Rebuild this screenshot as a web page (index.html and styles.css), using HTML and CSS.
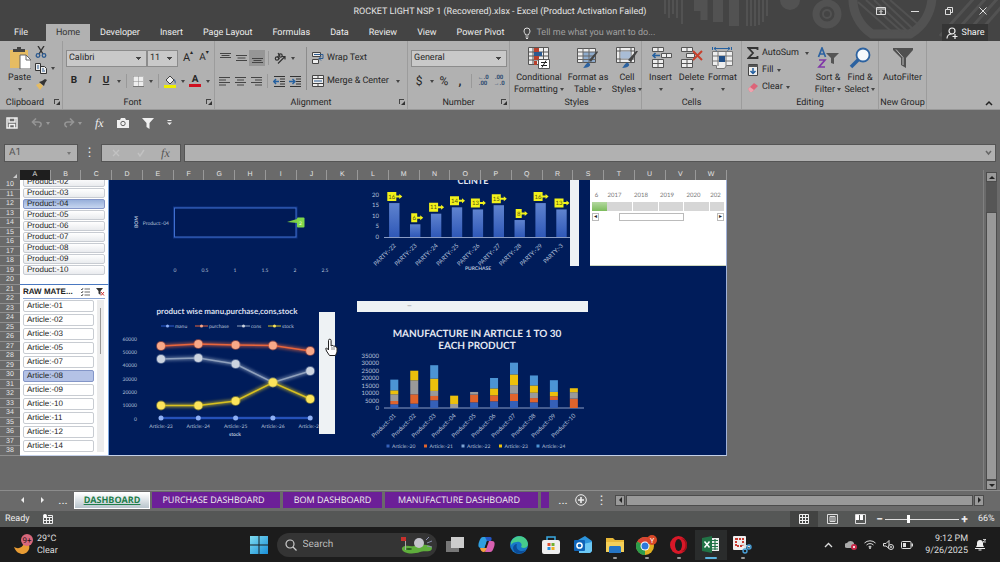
FILE: index.html
```html
<!DOCTYPE html>
<html lang="en">
<head>
<meta charset="utf-8">
<meta name="viewport" content="width=device-width, initial-scale=1">
<title>ROCKET LIGHT NSP 1 (Recovered).xlsx - Excel</title>
<link rel="stylesheet" href="styles.css">
</head>
<body>
<header class="top">
  <svg class="top-art" width="340" height="41" viewBox="660 0 340 41" aria-hidden="true">
    <g stroke="#525252" fill="none">
      <path stroke-width="2" d="M665 0v14M669 0v18M673 0v14M677 0v18M682 0v24M747 0v26M751 0v26M755 0v26M759 0v25M763 0v22M767 0v16"/>
      <path stroke-width="8" d="M698 0v11"/><path stroke-width="10" d="M718 0v22M734 0v26"/><path stroke-width="7" d="M704 0v20"/>
      <circle cx="827" cy="14" r="11" stroke-width="7"/><circle cx="827" cy="14" r="4" stroke-width="2"/>
      <path stroke-width="9" d="M853 -4a42 42 0 0 0 19 38h38a44 44 0 0 0 22-38"/>
      <path stroke-width="2" d="M866 0l36 32M874 0l34 32M882 0l32 30M858 2l34 30M890 0l30 26"/>
      <path stroke-width="3" d="M940 36l36-40M950 38l38-42M962 38l36-40M974 38l30-34"/>
    </g>
    <circle cx="790" cy="0" r="10" fill="#525252"/>
  </svg>
  <div class="titlebar">
    <span class="doc-title">ROCKET LIGHT NSP 1 (Recovered).xlsx - Excel (Product Activation Failed)</span>
    <div class="window-buttons">
      <button aria-label="Ribbon display options"><svg width="12" height="10" viewBox="0 0 12 10"><path d="M1.500 1.500h9v7h-9zM1.500 3h9M6 8V4.500M4.500 6L6 4.500 7.500 6" fill="none" stroke="#ddd"/></svg></button>
      <button aria-label="Minimize"><svg width="10" height="10" viewBox="0 0 10 10"><path d="M1 5.500h8" stroke="#ddd"/></svg></button>
      <button aria-label="Restore"><svg width="10" height="10" viewBox="0 0 10 10"><path d="M1.500 3.500h5v5h-5zM3.500 3.500v-2h5v5h-2" fill="none" stroke="#ddd"/></svg></button>
      <button aria-label="Close"><svg width="10" height="10" viewBox="0 0 10 10"><path d="M1.500 1.500l7 7M8.500 1.500l-7 7" stroke="#ddd"/></svg></button>
    </div>
  </div>
  <nav class="tabs" aria-label="Ribbon tabs">
    <button class="tab tab-file">File</button>
    <button class="tab tab-on">Home</button>
    <button class="tab">Developer</button>
    <button class="tab">Insert</button>
    <button class="tab">Page Layout</button>
    <button class="tab">Formulas</button>
    <button class="tab">Data</button>
    <button class="tab">Review</button>
    <button class="tab">View</button>
    <button class="tab">Power Pivot</button>
    <label class="tell"><svg width="8" height="12" viewBox="0 0 8 12"><path d="M2.500 8C2.500 6.500 1 6 1 4a3 3 0 0 1 6 0c0 2-1.500 2.500-1.500 4zM2.500 10h3M3 11.500h2" fill="none" stroke="#ddd"/></svg><input type="text" placeholder="Tell me what you want to do..." aria-label="Tell me what you want to do"></label>
    <button class="share"><svg width="12" height="12" viewBox="0 0 12 12"><g fill="none" stroke="#eee" stroke-width="1.200"><circle cx="6" cy="4" r="3"/><path d="M1 11.500c0-3 2-4.500 4.500-4.500M6.500 9.500h5M9 7v5"/></g></svg>Share</button>
  </nav>
</header>

<section class="ribbon" aria-label="Home ribbon">
  <div class="group g-clip">
    <div class="body">
      <button class="big paste"><svg width="22" height="22" viewBox="0 0 22 22"><path d="M1 3h18v18H1z" fill="#e6bc62"/><path d="M4 5V2h4V0h4v2h4v3z" fill="#444"/><path d="M11 8h6l5 5v9H11z" fill="#fff" stroke="#666"/><path d="M17 8v5h5" fill="none" stroke="#666"/></svg><span>Paste</span><i class="caret"></i></button>
      <div class="stack">
        <button aria-label="Cut"><svg width="12" height="12" viewBox="0 0 12 12"><path d="M3 0l5 8M9 0L4 8" stroke="#333" stroke-width="1.400"/><g fill="none" stroke="#2c5a90" stroke-width="1.300"><circle cx="3" cy="9.500" r="1.800"/><circle cx="9" cy="9.500" r="1.800"/></g></svg></button>
        <button aria-label="Copy"><svg width="12" height="12" viewBox="0 0 12 12"><path d="M.5 1.500h5v7h-5zM5.500 4.500h4l2 2v5h-6z" fill="#eee" stroke="#333"/><path d="M2 4h2M2 6h2M7 7h2M7 9h3" stroke="#2c5a90"/></svg><i class="caret"></i></button>
        <button aria-label="Format painter"><svg width="12" height="12" viewBox="0 0 12 12"><path d="M1 7l4-2 3 3-3 4z" fill="#e6bc62"/><path d="M4 4l5 4 1-3 2-3-2-1-3 2z" fill="#333"/></svg></button>
      </div>
    </div>
    <div class="cap">Clipboard<i class="launch"></i></div>
  </div>

  <div class="group g-font">
    <div class="body rows">
      <div class="row">
        <select class="combo c-font" aria-label="Font"><option>Calibri</option></select><select class="combo c-size" aria-label="Font size"><option>11</option></select>
        <button class="ib grow" aria-label="Increase font size">A<sup>▴</sup></button><button class="ib shrink" aria-label="Decrease font size">A<sup>▾</sup></button>
      </div>
      <div class="row">
        <button class="ib"><b>B</b></button><button class="ib"><b><em>I</em></b></button><button class="ib"><b><u>U</u></b></button><button class="cb" aria-label="Underline styles"><i class="caret"></i></button><i class="sep"></i>
        <button class="ib" aria-label="Borders"><svg width="11" height="11" viewBox="0 0 11 11"><path d="M0 0h11v11H0z" fill="#eee"/><path d="M.5.500h10M.5 5.500h10M.5 .5v10M5.500 .5v10M10.500 .5v10" fill="none" stroke="#888" stroke-dasharray="1 1"/><path d="M0 10.500h11" stroke="#777"/></svg></button><button class="cb" aria-label="Border styles"><i class="caret"></i></button><i class="sep"></i>
        <button class="ib" aria-label="Fill color"><svg width="13" height="13" viewBox="0 0 13 13"><path d="M2 5l4-4 4 4-4 4z" fill="#eee" stroke="#444"/><path d="M10 4c2 1 2 4 1 5z" fill="#2c5a90"/><path d="M0 10h12v3H0z" fill="#ee0"/></svg></button><button class="cb" aria-label="Fill colors"><i class="caret"></i></button>
        <button class="ib fontcolor" aria-label="Font color"><b>A</b></button><button class="cb" aria-label="Font colors"><i class="caret"></i></button>
      </div>
    </div>
    <div class="cap">Font<i class="launch"></i></div>
  </div>

  <div class="group g-align">
    <div class="body">
      <div class="rows">
        <div class="row">
          <button class="ib" aria-label="Top align"><svg class="ln" width="11" height="12" viewBox="0 0 11 12"><path d="M0 1.500h11M1.500 3.500h8M0 5.500h11"/></svg></button>
          <button class="ib" aria-label="Middle align"><svg class="ln" width="11" height="12" viewBox="0 0 11 12"><path d="M0 3.500h11M1.500 6h8M0 8.500h11"/></svg></button>
          <button class="ib pressed" aria-label="Bottom align"><svg class="ln" width="11" height="12" viewBox="0 0 11 12"><path d="M0 6.500h11M1.500 8.500h8M0 10.500h11"/></svg></button><i class="sep"></i>
          <button class="ib" aria-label="Orientation"><svg width="12" height="12" viewBox="0 0 12 12"><g fill="none" stroke="#333" stroke-width="1.200"><circle cx="3" cy="6.500" r="1.700"/><circle cx="6.500" cy="3.500" r="1.700"/><path d="M3.500 4.200l2 3M4 1l2 3M4 11.500l7-7M11 7.500v-3H8"/></g></svg></button><button class="cb" aria-label="Orientations"><i class="caret"></i></button>
        </div>
        <div class="row">
          <button class="ib" aria-label="Align left"><svg class="ln" width="11" height="10" viewBox="0 0 11 10"><path d="M0 1.500h11M0 4h7M0 6.500h11M0 9h7"/></svg></button>
          <button class="ib" aria-label="Center"><svg class="ln" width="11" height="10" viewBox="0 0 11 10"><path d="M0 1.500h11M2 4h7M0 6.500h11M2 9h7"/></svg></button>
          <button class="ib" aria-label="Align right"><svg class="ln" width="11" height="10" viewBox="0 0 11 10"><path d="M0 1.500h11M4 4h7M0 6.500h11M4 9h7"/></svg></button><i class="sep"></i>
          <button class="ib" aria-label="Decrease indent"><svg width="13" height="11" viewBox="0 0 13 11"><path d="M1 .500h11M7 3h5M7 5.500h5M7 8h5M1 10.500h11" stroke="#333"/><path d="M6 5.500H1M3 3L.8 5.500 3 8" fill="none" stroke="#2460a0" stroke-width="1.400"/></svg></button>
          <button class="ib" aria-label="Increase indent"><svg width="13" height="11" viewBox="0 0 13 11"><path d="M1 .500h11M7 3h5M7 5.500h5M7 8h5M1 10.500h11" stroke="#333"/><path d="M0 5.500h5M3.500 3L6 5.500 3.500 8" fill="none" stroke="#2460a0" stroke-width="1.400"/></svg></button>
        </div>
      </div>
      <i class="tall-sep"></i>
      <div class="rows">
        <button class="row tb"><svg width="12" height="12" viewBox="0 0 12 12"><path d="M.5.500h8v4h-8zM.5 7.500h6v4h-6z" fill="#eee" stroke="#444"/><path d="M2 2.500h9v4H7M9 4.500L7 6.500l2 2" fill="none" stroke="#2c5a90"/></svg>Wrap Text</button>
        <button class="row tb"><svg width="12" height="12" viewBox="0 0 12 12"><path d="M.5.500h11v11H.5zM.5 3.500h11M.5 8.500h11M6 .5v3M6 8.500v3" fill="#eee" stroke="#444"/><path d="M2 6h8" stroke="#2c5a90"/></svg>Merge &amp; Center<i class="caret"></i></button>
      </div>
    </div>
    <div class="cap">Alignment<i class="launch"></i></div>
  </div>

  <div class="group g-num">
    <div class="body rows">
      <div class="row"><select class="combo c-num" aria-label="Number format"><option>General</option></select></div>
      <div class="row num">
        <button class="ib">$</button><button class="cb" aria-label="Currencies"><i class="caret"></i></button><button class="ib">%</button><button class="ib"><b>,</b></button><i class="sep"></i>
        <button class="ib dec" aria-label="Increase decimal"><span>←.0</span><span>.00</span></button>
        <button class="ib dec" aria-label="Decrease decimal"><span>.00</span><span>→.0</span></button>
      </div>
    </div>
    <div class="cap">Number<i class="launch"></i></div>
  </div>

  <div class="group g-styles">
    <div class="body">
      <button class="big w-cond"><svg width="22" height="22" viewBox="0 0 22 22"><path d="M.5.500h20v17H.5zM.5 5h20M.5 9h20M.5 13h20M5 .5v17M15.500 .5v17" fill="#eee" stroke="#555"/><path d="M6 1h5v4H6zM6 9h5v4H6zM6 14h3v4H6z" fill="#b8402c"/><path d="M6 5h8v4H6z" fill="#2c5a90"/><path d="M10.500 12.500h11v9h-11z" fill="#fff" stroke="#555"/><path d="M13 15.500h6M13 18.500h6M18 13.500l-4 7" stroke="#222"/></svg><span>Conditional<br>Formatting <i class="caret"></i></span></button>
      <button class="big w-fmt"><svg width="22" height="22" viewBox="0 0 22 22"><path d="M.5 1.500h18v14H.5z" fill="#eee" stroke="#555"/><path d="M6 5h12v10H6z" fill="#8eabcc"/><path d="M.5 5h18M.5 9h18M.5 12.500h18M6 1v15M12 1v15" stroke="#666" fill="none"/><path d="M21 5l-7 10-2-2 8-9z" fill="#444"/><path d="M6 21c2-1 3-6 6-5 3 2 0 5-6 5z" fill="#2c62a0"/></svg><span>Format as<br>Table <i class="caret"></i></span></button>
      <button class="big w-cell"><svg width="22" height="22" viewBox="0 0 22 22"><path d="M.5.500h18v15H.5zM.5 4h18M.5 12h18M4 .5v15M15 .5v15" fill="#eee" stroke="#555"/><path d="M4.500 4.500h10v7h-10z" fill="#a9bdd6"/><path d="M22 4l-7 11-3-2 8-9z" fill="#444"/><path d="M6 21c2-1 3-6 6-5 3 2 0 5-6 5z" fill="#2c62a0"/></svg><span>Cell<br>Styles <i class="caret"></i></span></button>
    </div>
    <div class="cap">Styles</div>
  </div>

  <div class="group g-cells">
    <div class="body">
      <button class="big"><svg width="22" height="22" viewBox="0 0 22 22"><path d="M2.500.500h11v4h-11zM8 .5v4M2.500 12.500h11v8h-11zM8 12.500v8M2.500 16.500h11M11.500 6.500h10v4h-10zM16.500 6.500v4" fill="#eee" stroke="#555"/><path d="M10 8.500H3M5.500 6L3 8.500 5.500 11" fill="none" stroke="#2460a0" stroke-width="1.600"/></svg><span>Insert</span><i class="caret"></i></button>
      <button class="big"><svg width="22" height="22" viewBox="0 0 22 22"><path d="M.5.500h11v4H.5zM6 .5v4M.5 12.500h11v8H.5zM6 12.500v8M.5 16.500h11M5.500 6.500h8v4h-8z" fill="#eee" stroke="#555"/><path d="M12 4l9 9M21 4l-9 9" stroke="#c8402c" stroke-width="2"/></svg><span>Delete</span><i class="caret"></i></button>
      <button class="big"><svg width="22" height="22" viewBox="0 0 22 22"><path d="M2 1.500h16M4.500-.5L2 1.500l2.500 2M15.500-.5l2.500 2-2.500 2M.5 0v3M19.500 0v3" fill="none" stroke="#2460a0"/><path d="M.5 4.500h20v14h-6l-2 3h-8v-3h-4zM.5 9h20M.5 14h20M6 5v14M14 5v14" fill="#eee" stroke="#777"/><path d="M7 9h6v6H7z" fill="#1f4d86"/></svg><span>Format</span><i class="caret"></i></button>
    </div>
    <div class="cap">Cells</div>
  </div>

  <div class="group g-edit">
    <div class="body">
      <div class="edit-list">
        <button class="tb wide"><svg width="12" height="12" viewBox="0 0 12 12"><path d="M10.500 3V1H1.500L6 6l-4.500 5h9V9" fill="none" stroke="#333" stroke-width="1.800"/></svg>AutoSum<i class="caret"></i></button>
        <button class="tb"><svg width="12" height="12" viewBox="0 0 12 12"><path d="M1.500.500h9v11h-9z" fill="#eee" stroke="#444"/><path d="M1 1h10v2H1z" fill="#555"/><path d="M6 4v5M3.500 7L6 9.500 8.500 7" fill="none" stroke="#2460a0" stroke-width="1.500"/></svg>Fill<i class="caret"></i></button>
        <button class="tb"><svg width="12" height="12" viewBox="0 0 12 12"><path d="M1 8l6-6 4 3-6 6H3z" fill="#dc6478"/><path d="M1 8l2-2 4 3-2 2H3z" fill="#eda3ae"/></svg>Clear<i class="caret"></i></button>
      </div>
      <button class="big"><svg width="22" height="22" viewBox="0 0 22 22"><path d="M1.500 10L5 1l3.500 9M2.500 7h5" fill="none" stroke="#2c62a0" stroke-width="1.700"/><path d="M2 13h6l-6 7h6" fill="none" stroke="#8038a8" stroke-width="1.700"/><path d="M9 6h13l-5 5v6l-3-1v-5z" fill="#555"/></svg><span>Sort &amp;<br>Filter <i class="caret"></i></span></button>
      <button class="big"><svg width="22" height="22" viewBox="0 0 22 22"><path d="M2 20l8-8" stroke="#2c62a0" stroke-width="3.500"/><circle cx="14" cy="8" r="6.500" fill="#f4f8fc" stroke="#2c62a0" stroke-width="1.800"/></svg><span>Find &amp;<br>Select <i class="caret"></i></span></button>
    </div>
    <div class="cap">Editing</div>
  </div>

  <div class="group g-new">
    <div class="body"><button class="big"><svg width="22" height="22" viewBox="0 0 22 22"><path d="M1 1h20v2l-7 8v10l-5-3v-7L1 3z" fill="#505050"/><path d="M4 2.500l7 8V18" fill="none" stroke="#bbb"/></svg><span>AutoFilter</span></button></div>
    <div class="cap">New Group</div>
  </div>
  <button class="collapse" aria-label="Collapse the ribbon"><svg width="8" height="6" viewBox="0 0 8 6"><path d="M1 5l3-3 3 3" fill="none" stroke="#222" stroke-width="1.500"/></svg></button>
</section>

<div class="qat">
  <button aria-label="Save"><svg width="12" height="12" viewBox="0 0 12 12"><path d="M1 1h10v10H1zM3 1v4h6V1M3.500 11V7.500h5V11" fill="none" stroke="#f0f0f0" stroke-width="1.500"/></svg></button>
  <button class="with-caret dim" aria-label="Undo"><svg width="12" height="10" viewBox="0 0 12 10"><path d="M5 .5L1.500 4 5 7.500M2 4h5c4 0 4 4 1 5" fill="none" stroke="#959595" stroke-width="1.600"/></svg><i class="caret"></i></button>
  <button class="with-caret dim" aria-label="Redo"><svg width="12" height="10" viewBox="0 0 12 10"><path d="M7 .5L10.500 4 7 7.500M10 4H5C1 4 1 8 4 9" fill="none" stroke="#959595" stroke-width="1.600"/></svg><i class="caret"></i></button>
  <button class="fx" aria-label="Insert function">fx</button>
  <button aria-label="Camera"><svg width="12" height="10" viewBox="0 0 12 10"><path d="M0 2h3l1-2h4l1 2h3v8H0z" fill="#f0f0f0"/><circle cx="6" cy="5.500" r="2.200" fill="none" stroke="#666"/></svg></button>
  <button aria-label="Filter"><svg width="12" height="11" viewBox="0 0 12 11"><path d="M0 0h12L7.500 5v6L4.500 9V5z" fill="#f0f0f0"/></svg></button>
  <button aria-label="Customize toolbar"><svg width="5" height="6" viewBox="0 0 5 6"><path d="M.5.500h4" stroke="#eee"/><path d="M0 2.500h5L2.500 5z" fill="#eee"/></svg></button>
</div>

<div class="formula">
  <label class="namebox"><input type="text" value="A1" aria-label="Name box"><i class="caret"></i></label>
  <span class="dots">⋮</span>
  <div class="fbuttons">
    <button aria-label="Cancel"><svg width="8" height="8" viewBox="0 0 8 8"><path d="M1 1l6 6M7 1L1 7" stroke="#c2c2c2" stroke-width="1.400"/></svg></button>
    <button aria-label="Enter"><svg width="8" height="8" viewBox="0 0 8 8"><path d="M1 4l2 3 4-6" fill="none" stroke="#c2c2c2" stroke-width="1.400"/></svg></button>
    <button class="fx" aria-label="Function">fx</button>
  </div>
  <label class="fbar"><input type="text" aria-label="Formula bar"><svg width="7" height="6" viewBox="0 0 7 6"><path d="M1 1l2.500 3L6 1" fill="none" stroke="#666" stroke-width="1.500"/></svg></label>
</div>

<main class="work">
  <div class="sheet">
    <div class="corner"></div>
    <div class="cols" id="cols"></div>
    <div class="rownums" id="rownums"></div>
    <div class="canvas">
      <section class="slicer slicer-product" aria-label="Product slicer">
        <button>Product:-02</button><button>Product:-03</button><button class="on">Product:-04</button><button>Product:-05</button><button>Product:-06</button><button>Product:-07</button><button>Product:-08</button><button>Product:-09</button><button>Product:-10</button>
      </section>
      <section class="slicer slicer-raw" aria-label="Raw material slicer">
        <div class="slicer-head"><strong>RAW MATE...</strong>
          <svg width="9" height="8" viewBox="0 0 9 8"><path d="M3.500 1h5.500M3.500 4h5.500M3.500 7h5.500M0 1l1 1 1-2M0 4l1 1 1-2M0 7l1 1 1-2" fill="none" stroke="#444" stroke-width=".8"/></svg>
          <svg width="9" height="8" viewBox="0 0 9 8"><path d="M0 0h7L4.500 3v4L2.500 5.500V3z" fill="#333"/><path d="M5 4l3 3.500M8 4L5 7.500" stroke="#c33"/></svg></div>
        <div class="slicer-body">
          <div class="slicer-list"><button>Article:-01</button><button>Article:-02</button><button>Article:-03</button><button>Article:-05</button><button>Article:-07</button><button class="on">Article:-08</button><button>Article:-09</button><button>Article:-10</button><button>Article:-11</button><button>Article:-12</button><button>Article:-14</button></div>
          <div class="slicer-scroll"><i></i></div>
        </div>
      </section>

      <svg class="chart chart-bom" viewBox="112 180 240 100" role="img" aria-label="BOM chart" id="bom">
        <rect x="174.500" y="208" width="121.500" height="29" fill="none" stroke="#1f4aa8" stroke-width="3" opacity=".5"/>
        <rect x="174.500" y="208" width="121.500" height="29" fill="#001a56" stroke="#3f6fd0"/>
        <path d="M287 222l10-3v4z" fill="#7dcf45"/><rect x="297" y="217.500" width="7.500" height="10" rx="1" fill="#7ed84a"/>
        <text x="300.500" y="224.500" class="t5 mid callout">2</text>
        <text transform="translate(138 222) rotate(-90)" class="t5 mid bold">BOM</text>
        <text x="169" y="225" class="t5 end">Product:-04</text>
      </svg>
      <svg class="chart chart-client" viewBox="357 180 213 96" role="img" aria-label="Purchase by party" id="client">
        <defs><linearGradient id="barfill" x2="0" y2="1"><stop offset="0" stop-color="#5f83cf"/><stop offset="1" stop-color="#2f58b8"/></linearGradient></defs>
        <text x="473" y="184" class="t9 mid bold">CLINTE</text>
        <path d="M384 237.500h186" stroke="#8a9cc4"/>
        <text x="478" y="270" class="t5 mid bold">PURCHASE</text>
      </svg>
      <div class="strip strip-client"></div>
      <section class="timeline" aria-label="Timeline">
        <div class="years"><span>6</span><span>2017</span><span>2018</span><span>2019</span><span>2020</span><span>202</span></div>
        <div class="track"><i class="sel"></i><i></i><i></i><i></i><i></i></div>
        <div class="tl-scroll"><button aria-label="Earlier">◂</button><i></i><button aria-label="Later">▸</button></div>
      </section>
      <div class="strip strip-wide">—</div>
      <svg class="chart chart-line" viewBox="112 300 207 146" role="img" aria-label="product wise manu,purchase,cons,stock" id="line">
        <defs><filter id="glow" x="-20%" y="-50%" width="140%" height="200%"><feGaussianBlur stdDeviation="1.500"/></filter></defs>
        <text x="227" y="314" class="t8 mid bold">product wise manu,purchase,cons,stock</text>
        <text x="235" y="436" class="t5 mid bold">stock</text>
      </svg>
      <div class="strip strip-line"></div>
      <svg class="chart chart-stack" viewBox="357 320 235 132" role="img" aria-label="Manufacture in article 1 to 30 each product" id="stack">
        <text x="477" y="337" class="t10 mid bold">MANUFACTURE IN ARTICLE 1 TO 30</text>
        <text x="477" y="349" class="t10 mid bold">EACH PRODUCT</text>
        <path d="M384 408h200" stroke="#8a9cc4"/>
      </svg>
      <svg class="pointer" width="13" height="19" viewBox="0 0 13 19" aria-hidden="true"><path d="M3.500 12V2.500a1.300 1.300 0 0 1 2.600 0V8l1-.6 1 .3.700.5 1.200-.1.700.9 1.300.5V14l-1.500 3.500h-6L1.500 13 .7 10.500l1-.5z" fill="#fff" stroke="#222"/><path d="M7 9v3M9 9v3" stroke="#555" stroke-width=".7"/></svg>
    </div>
  </div>
  <div class="vscroll" aria-label="Vertical scroll">
    <button aria-label="Scroll up"><i class="up"></i></button><span class="vgap"></span><span class="vthumb"></span><button aria-label="Scroll down"><i class="down"></i></button>
  </div>
</main>

<div class="sheetbar">
  <button class="nav" aria-label="Previous sheet"><i class="lt"></i></button>
  <button class="nav" aria-label="Next sheet"><i class="rt"></i></button>
  <button class="more">...</button>
  <button class="stab stab-on">DASHBOARD</button>
  <button class="stab s1">PURCHASE DASHBOARD</button>
  <button class="stab s2">BOM DASHBOARD</button>
  <button class="stab s3">MANUFACTURE DASHBOARD</button>
  <button class="stab s4" aria-label="Next tab"></button>
  <button class="more">...</button>
  <button class="plus" aria-label="New sheet"><svg width="12" height="12" viewBox="0 0 12 12"><path d="M6 3v6M3 6h6" stroke="#eee" stroke-width="1.600"/><circle cx="6" cy="6" r="5.300" fill="none" stroke="#eee"/></svg></button>
  <span class="dots">⋮</span>
  <div class="hscroll"><button aria-label="Scroll left"><i class="lt"></i></button><span></span><button aria-label="Scroll right"><i class="rt"></i></button></div>
</div>

<footer class="status">
  <span>Ready</span>
  <svg class="macro" width="10" height="10" viewBox="0 0 10 10"><path d="M.5 3.500h9v6h-9zM.5 6.500h9M3.500 3.500v6M6.500 3.500v6M5 1.500h4.500v2" fill="none" stroke="#eee"/><circle cx="2" cy="2" r="2" fill="#fff"/></svg>
  <div class="views">
    <button class="on" aria-label="Normal view"><svg width="10" height="10" viewBox="0 0 10 10"><path d="M.5.500h9v9h-9zM3.500.500v9M6.500.500v9M.5 3.500h9M.5 6.500h9" fill="none" stroke="#eee"/></svg></button>
    <button aria-label="Page layout"><svg width="11" height="10" viewBox="0 0 11 10"><path d="M.5.500h10v9H.5zM3 2.500h5v5H3zM4 4h3M4 6h3" fill="none" stroke="#ddd"/></svg></button>
    <button aria-label="Page break preview"><svg width="11" height="10" viewBox="0 0 11 10"><path d="M.5.500h10v9H.5z" fill="none" stroke="#ddd"/><path d="M1 1h3v5H1zM5 1h3v5H5z" fill="#fff"/></svg></button>
  </div>
  <div class="zoom"><button aria-label="Zoom out">−</button><input type="range" min="0" max="100" value="31" aria-label="Zoom"><button aria-label="Zoom in">+</button></div>
  <span class="pct">66%</span>
</footer>

<div class="taskbar">
  <button class="weather"><svg width="22" height="22" viewBox="0 0 22 22"><path d="M0 13c5 3 10 0 11-7 7 4 5 13-2 14-4 0-7-2-9-7z" fill="#e89c34"/><circle cx="13" cy="6" r="6" fill="#d8687c"/><text x="13" y="9" text-anchor="middle" font-size="8" fill="#281014">9+</text></svg><span>29°C<br>Clear</span></button>
  <div class="apps">
    <button aria-label="Start"><svg width="18" height="18" viewBox="0 0 18 18"><defs><linearGradient id="win" x2="1" y2="1"><stop offset="0" stop-color="#7fdcf0"/><stop offset="1" stop-color="#1a8fd8"/></linearGradient></defs><path d="M0 0h8.500v8.500H0zM9.500 0H18v8.500H9.500zM0 9.500h8.500V18H0zM9.500 9.500H18V18H9.500z" fill="url(#win)"/></svg></button>
    <label class="search"><svg width="12" height="12" viewBox="0 0 12 12"><circle cx="5" cy="5" r="4" fill="none" stroke="#ccc" stroke-width="1.200"/><path d="M8 8l3.500 3.500" stroke="#ccc" stroke-width="1.300"/></svg><input type="search" placeholder="Search" aria-label="Search">
      <svg width="34" height="18" viewBox="0 0 34 18"><path d="M2 12c3-4 8-1 12-2 6-2 18-2 18 2 0 5-7 2-12 4-8 3-19 1-18-4z" fill="#5fae3c"/><ellipse cx="9" cy="13" rx="3" ry="1" fill="#245c1c"/><path d="M5.500 14V1" stroke="#aaa"/><path d="M1 1h5v4H1z" fill="#c8302c"/><circle cx="19" cy="7" r="5" fill="#c4c4cc"/><path d="M26 4l3-3M27 7l5-2M27 10l5 1" stroke="#8a90b0"/></svg></label>
    <button aria-label="Task view"><svg width="18" height="16" viewBox="0 0 18 16"><path d="M0 4h13v11H0z" fill="#777"/><path d="M5 0h13v11H5z" fill="#ccc"/></svg></button>
    <button aria-label="Copilot"><svg width="17" height="17" viewBox="0 0 17 17"><path d="M5 1h5L7 12H3C0 12 0 9 1 6 2 3 3 1 5 1z" fill="#2f9fe0"/><path d="M7 1h5c2 0 2 2 1 4H9z" fill="#2456c4"/><path d="M10 5h4c3 0 3 3 2 6-1 3-2 5-4 5H7z" fill="#d860b0"/><path d="M2 12h6l2-6-2 8c-1 3-5 3-6-2z" fill="#f0a040"/><path d="M9 5h2L8.500 12H6.500z" fill="#1c1c1c"/></svg></button>
    <button aria-label="Edge"><svg width="18" height="18" viewBox="0 0 18 18"><circle cx="9" cy="9" r="9" fill="#1878c8"/><path d="M1 6C4-2 17-2 18 8c0 4-5 5-7 3 2-3-1-6-4-5-3 0-5 1-6 3z" fill="#46cc8c"/><path d="M7 8c-2 5 3 9 9 6-3 5-12 5-13-2 0-2 2-4 4-4z" fill="#0c4c98"/></svg></button>
    <button aria-label="Store"><svg width="18" height="18" viewBox="0 0 18 18"><path d="M5 5V1h8v4" fill="none" stroke="#38a8e0" stroke-width="1.500"/><rect x="0" y="4" width="18" height="14" rx="2" fill="#eee"/><path d="M5.500 7h3v3h-3z" fill="#e05030"/><path d="M9.500 7h3v3h-3z" fill="#70b030"/><path d="M5.500 11h3v3h-3z" fill="#2090e0"/><path d="M9.500 11h3v3h-3z" fill="#f0b020"/></svg></button>
    <button aria-label="Outlook"><svg width="18" height="17" viewBox="0 0 18 17"><path d="M4 4l7-4 7 5v10l-2 2H5z" fill="#2c94dc"/><path d="M5 9l13-3v9l-2 2H5z" fill="#6cc8f4"/><rect x="0" y="4" width="11" height="11" rx="1" fill="#0f64b8"/><circle cx="5.500" cy="9.500" r="2.600" fill="none" stroke="#fff" stroke-width="1.500"/></svg></button>
    <button class="run" aria-label="File Explorer"><svg width="18" height="16" viewBox="0 0 18 16"><path d="M0 1h7l2 2h9v12H0z" fill="#e8b838"/><path d="M0 5h18v10H0z" fill="#f4cf58"/><path d="M3 11c0-2 1-2 2-2h8c1 0 2 0 2 2v5H3z" fill="#2474c4"/></svg></button>
    <button class="run" aria-label="Chrome"><svg width="21" height="20" viewBox="0 0 21 20"><circle cx="9" cy="11" r="9" fill="#e0b020"/><path d="M9 11L1.200 6.500a9 9 0 0 1 15.600 0z" fill="#d84434"/><path d="M9 11L1.200 6.500A9 9 0 0 0 9 20z" fill="#2c9c4c"/><circle cx="9" cy="11" r="4.500" fill="#fff"/><circle cx="9" cy="11" r="3.500" fill="#2c78dc"/><circle cx="16" cy="5" r="5" fill="#d84828"/><text x="16" y="7.500" text-anchor="middle" font-size="7" fill="#fff">Y</text></svg></button>
    <button class="run" aria-label="Opera"><svg width="17" height="18" viewBox="0 0 17 18"><ellipse cx="8.500" cy="9" rx="8.500" ry="9" fill="#d81828"/><path d="M11 3c6 0 6 12 0 12 5 2 6-3 6-6s-2-8-6-6z" fill="#981018"/><ellipse cx="8.500" cy="9" rx="3.500" ry="6" fill="#1c1c1c"/></svg></button>
    <button class="run active" aria-label="Excel"><svg width="17" height="17" viewBox="0 0 17 17"><path d="M9 2h8v13H9z" fill="#eee"/><path d="M10 4.500h6M10 7.500h6M10 10.500h6M10 13h6M13 3v11" stroke="#217346" stroke-width="1.200"/><path d="M0 2l10-2v17L0 15z" fill="#217346"/><path d="M2.500 5.500l5 6M7.500 5.500l-5 6" stroke="#fff" stroke-width="1.500"/></svg></button>
    <button class="run" aria-label="Snipping tool"><svg width="19" height="18" viewBox="0 0 19 18"><rect width="13" height="14" rx="1" fill="#eee"/><path d="M3 3h7v7H3z" fill="none" stroke="#c83a30" stroke-width="2" stroke-dasharray="2 1"/><path d="M8 8l9 3M12 6v7" stroke="#ddd" stroke-width="1.500"/><circle cx="16" cy="11" r="2" fill="none" stroke="#4aa0d8" stroke-width="1.400"/><circle cx="12" cy="15" r="2" fill="none" stroke="#4aa0d8" stroke-width="1.400"/></svg></button>
  </div>
  <div class="tray">
    <button aria-label="Hidden icons"><svg width="9" height="6" viewBox="0 0 9 6"><path d="M1 5l3.500-3.500L8 5" fill="none" stroke="#ddd" stroke-width="1.300"/></svg></button>
    <button aria-label="OneDrive"><svg width="12" height="10" viewBox="0 0 12 10"><path d="M2 8a2.500 2.500 0 0 1 0-5 4 4 0 0 1 7 0v5z" fill="#aaa"/><circle cx="9" cy="7" r="3" fill="#c82848"/><path d="M8 6l2 2M10 6L8 8" stroke="#fff" stroke-width=".8"/></svg></button>
    <button aria-label="Wi-Fi"><svg width="12" height="9" viewBox="0 0 12 9"><path d="M.5 3a8 8 0 0 1 11 0M2.500 5a5 5 0 0 1 7 0M4.500 6.800a2.200 2.200 0 0 1 3 0" fill="none" stroke="#ddd"/><circle cx="6" cy="8" r="1" fill="#ddd"/></svg></button>
    <button aria-label="Volume muted"><svg width="11" height="10" viewBox="0 0 11 10"><path d="M.5 3.500H3L6 .5v8L3 6H.5z" fill="none" stroke="#ddd"/><circle cx="8" cy="7" r="2.500" fill="#1c1c1c" stroke="#ddd"/><path d="M7 6l2 2M9 6L7 8" stroke="#ddd" stroke-width=".7"/></svg></button>
    <button aria-label="Battery"><svg width="12" height="8" viewBox="0 0 12 8"><rect x=".5" y=".5" width="9.500" height="7" rx="1" fill="none" stroke="#ddd"/><path d="M2 2h3v4H2zM10.500 2.500h1.500v3h-1.500z" fill="#ddd"/></svg></button>
    <button class="clock"><span>9:12 PM<br>9/26/2025</span></button>
    <button aria-label="Notifications"><svg width="11" height="12" viewBox="0 0 11 12"><path d="M1 8l1-2V4c0-4 6-4 6 0v2l1 2z" fill="#eee"/><path d="M0 9.500h10M3.500 11h3" stroke="#eee"/><path d="M8 .5h3L8 3h3" fill="none" stroke="#eee" stroke-width=".8"/></svg></button>
  </div>
</div>
<script src="app.js"></script>
</body>
</html>
```
FILE: styles.css
```css
* { box-sizing: border-box; }
html, body { height: 100%; }
body {
  margin: 0; min-height: 100vh; display: flex; flex-direction: column; overflow: hidden;
  background: #6a6a6a; color: #262626;
  font: 9px/12px Roboto, "Open Sans", sans-serif;
  text-rendering: geometricPrecision;
}
button, input, select { font: inherit; color: inherit; text-rendering: inherit; border: 0; background: none; padding: 0; margin: 0; border-radius: 0; outline: 0; }
button { display: flex; align-items: center; justify-content: center; }
svg { flex: none; display: block; }
.caret { flex: none; display: inline-block; width: 0; height: 0; border: 2px solid transparent; border-top: 3px solid #444; border-bottom: 0; vertical-align: middle; }

/* Title bar and ribbon tabs */
.top { position: relative; background: #444; color: #e4e4e4; }
.top-art { position: absolute; right: 0; top: 0; }
.titlebar { position: relative; height: 24px; display: flex; justify-content: center; align-items: center; }
.window-buttons { position: absolute; right: 0; top: 0; display: flex; }
.window-buttons button { width: 34px; height: 22px; }
.tabs { position: relative; display: flex; height: 17px; }
.tab { padding: 0 10px; color: #eee; white-space: nowrap; }
.tab-file { width: 46px; padding: 0 4px 0 0; }
.tab-on { width: 44px; padding: 0; background: #b1b1b1; color: #333; }
.tell { display: flex; align-items: center; gap: 5px; margin-left: 9px; color: #aaa; }
.tell input { width: 150px; }
.tell input::placeholder { color: #a0a0a0; opacity: 1; }
.share { margin-left: auto; margin-right: 12px; width: 46px; gap: 4px; background: #353535; color: #f4f4f4; }

/* Ribbon */
.ribbon { display: grid; grid-template-columns: 63px 152px 193px 102px 132px 100px 137px 48px 1fr; background: #b1b1b1; height: 69px; border-bottom: 1px solid #999; }
.group { display: grid; grid-template-rows: 1fr 13px; border-right: 1px solid #9c9c9c; min-width: 0; }
.body { display: flex; }
.cap { position: relative; text-align: center; line-height: 14px; }
.g-clip .cap { padding-right: 12px; }
.g-font .cap { padding-right: 12px; }
.launch { position: absolute; right: 3px; top: 3px; width: 5px; height: 5px; border-left: 1px solid #444; border-top: 1px solid #444; }
.launch::after { content: ""; position: absolute; right: -1px; bottom: -1px; border: 2px solid transparent; border-right-color: #333; border-bottom-color: #333; }
.big { flex-direction: column; justify-content: flex-start; padding-top: 6px; white-space: nowrap; }
.big svg { margin-bottom: 3px; }
.big > .caret { margin-top: 4px; }
.paste { width: 39px; }
.stack { padding-top: 5px; display: grid; grid-template-rows: 12px 20px 12px; }
.stack button { justify-content: flex-start; gap: 4px; margin-left: -4px; }
.rows { display: flex; flex-direction: column; gap: 7px; padding-top: 9px; }
.row { display: flex; height: 16px; align-items: center; }
.g-font .body, .g-num .body { padding-left: 3px; }
.combo { appearance: none; height: 17px; padding: 0 2px; border: 1px solid #8c8c8c; background: #c9c9c9 conic-gradient(from -45deg at 50% 100%, #444 90deg, transparent 0) no-repeat right 5px center / 5px 3px; }
.c-font { width: 81px; }
.c-size { width: 31px; }
.c-num { width: 96px; }
.ib { width: 16px; height: 16px; font-size: 10px; }
.cb { width: 9px; height: 16px; }
.grow { margin-left: 2px; font-size: 11px; }
.ib sup { font-size: 6px; line-height: 6px; align-self: flex-start; }
.sep { width: 1px; height: 14px; margin: 0 3px; background: #999; }
.tall-sep { width: 1px; margin: 6px 5px 6px 3px; background: #8c8c8c; }
.fontcolor { font-size: 10px; line-height: 9px; }
.fontcolor b { border-bottom: 3px solid #d01020; padding: 0 3px; }
.g-align .body > .rows:first-child { padding-left: 2px; width: 88px; }
.pressed { background: #969696; }
.ln path { stroke: #444; fill: none; }
.tb { gap: 3px; justify-content: flex-start; white-space: nowrap; }
.row .caret { margin-left: 4px; }
.row .cb .caret { margin-left: 0; }
.num .ib { font-size: 12px; }
.num .dec { flex-direction: column; font-size: 6px; line-height: 6px; font-weight: bold; color: #2c4a70; }
.g-styles .body { justify-content: center; gap: 2px; padding-left: 3px; }
.w-cond { width: 52px; }
.w-fmt { width: 42px; }
.w-cell { width: 32px; }
.g-cells .body { padding-left: 3px; }
.g-cells .big { width: 31px; }
.edit-list { width: 70px; padding: 4px 0 0 5px; display: grid; grid-auto-rows: 17px; align-content: start; }
.edit-list .tb { height: 16px; }
.edit-list .wide .caret { margin-left: 3px; }
.g-edit .big { width: 32px; }
.g-new .body { justify-content: center; }
.collapse { align-self: end; justify-self: end; margin: 0 7px 3px 0; }

/* Quick access toolbar and formula bar */
.qat { display: flex; align-items: center; gap: 13px; height: 26px; padding-left: 6px; }
.qat .with-caret { gap: 3px; }
.qat .dim .caret { border-top-color: #999; }
.fx { font: italic 12px/14px "Liberation Serif", serif; color: #f0f0f0; }
.formula { display: flex; height: 34px; padding: 8px 4px; }
.namebox, .fbuttons, .fbar { display: flex; align-items: center; background: #b1b1b1; border: 1px solid #555; }
.namebox { width: 74px; padding: 0 6px 0 4px; color: #555; }
.namebox input { width: 100%; font-size: 10px; }
.namebox .caret { border-top-color: #777; }
.dots { width: 23px; text-align: center; color: #eee; font-size: 12px; line-height: 17px; }
.fbuttons { width: 80px; justify-content: space-around; padding: 0 2px; }
.fbuttons .fx { color: #555; }
.fbar { flex: 1; margin-left: 3px; padding-right: 3px; }
.fbar input { flex: 1; }

/* Worksheet */
.work { flex: 1; display: flex; min-height: 0; border-bottom: 1px solid #8c8c8c; }
.sheet { flex: 1; display: grid; grid-template: 10px 276px / 20px 707px; align-content: start; overflow: hidden; border-right: 1px solid #808080; margin-right: 2px; }
.corner::after { content: ""; display: block; margin: 4px 0 0 13px; border: 2px solid transparent; border-right-color: #ccc; border-bottom-color: #ccc; width: 0; }
.cols { display: grid; grid-template-columns: repeat(23, 1fr); color: #e4e4e4; font: 7px/10px "Liberation Sans", sans-serif; text-align: center; }
.cols span { border-right: 1px solid #999; }
.cols .cur { background: #1e1e1e; border-bottom: 1px solid #2f8050; }
.rownums { display: grid; grid-template-rows: repeat(29, 1fr); color: #e4e4e4; font: 7px/10px "Liberation Sans", sans-serif; text-align: center; }
.rownums span { border-bottom: 1px solid #909090; min-height: 0; overflow: hidden; }
.canvas { position: relative; overflow: hidden; background: #001c5a; border-right: 1px solid #9fb0d8; border-bottom: 1px solid #c4d0e8; }
.canvas > * { position: absolute; }

.slicer { left: 0; width: 89px; background: #fff; font: 8px/10px "Liberation Sans", sans-serif; color: #222; border-right: 1px solid #7ea8e0; }
.slicer button { justify-content: flex-start; width: 100%; padding-left: 3px; border: 1px solid #c8ccd2; border-radius: 2px; background: #fff; }
.slicer-product { top: -3px; height: 107px; padding: 0 3px; display: grid; grid-auto-rows: 10px; gap: 1px; align-content: start; }
.slicer-product button { background: linear-gradient(#fff, #e9ebee); }
.slicer .on { background: #b4c2e6; border-color: #8496c8; }
.slicer-product .on { background: linear-gradient(#98b0da, #c6d6f0); }
.slicer-raw { top: 104px; height: 171px; border-top: 1px solid #4a78c0; padding: 0 3px; }
.slicer-head { display: flex; align-items: center; gap: 6px; height: 14px; border-bottom: 1px solid #8aa4d4; white-space: nowrap; }
.slicer-head strong { width: 53px; }
.slicer-body { display: flex; padding-top: 1px; }
.slicer-list { width: 71px; display: grid; grid-auto-rows: 12px; gap: 2px; }
.slicer-scroll { width: 7px; margin-left: 3px; background: #ececec; }
.slicer-scroll i { display: block; width: 1px; height: 46px; margin: 8px 3px; background: #999; }

.chart { fill: #b9c4dc; font-family: Lato, "Open Sans", sans-serif; }
.chart-bom { left: 92px; top: 0; width: 240px; height: 100px; }
.chart-client { left: 337px; top: 0; width: 213px; height: 96px; }
.chart-line { left: 92px; top: 120px; width: 207px; height: 146px; }
.chart-stack { left: 337px; top: 140px; width: 235px; height: 132px; }
.t5 { font-size: 5px; }
.t6 { font-size: 6px; }
.t8 { font-size: 8px; fill: #d8deec; }
.t9 { font-size: 9px; fill: #e4e8f2; }
.t10 { font-size: 10px; fill: #e4e8f2; }
.mid { text-anchor: middle; }
.end { text-anchor: end; }
.bold { font-weight: bold; }
.callout { fill: #f4ffe8; }
.tag { fill: #f2f21a; }
.tagtext { font-size: 6px; fill: #555510; }

.strip { background: #eef2f4; }
.strip-client { left: 550px; top: 0; width: 9px; height: 86px; }
.strip-wide { left: 337px; top: 121px; width: 231px; height: 11px; padding-left: 50px; font-size: 6px; line-height: 11px; color: #777; }
.strip-line { left: 299px; top: 132px; width: 16px; height: 122px; }
.pointer { left: 305px; top: 158px; }
.timeline { left: 570px; top: 0; width: 137px; height: 86px; padding: 12px 3px 0 2px; background: #fff; border-bottom: 1px solid #cfd8c0; }
.years { display: grid; grid-template-columns: 9px 27px 26px 26px 27px 1fr; font: 6px/8px Lato, sans-serif; color: #777; text-align: center; }
.track { display: grid; grid-template-columns: 15px 26px 26px 25px 26px 1fr; height: 9px; margin-top: 2px; background: #d6d6d6; }
.track i { border-right: 1px solid #fff; }
.track .sel { background: linear-gradient(#b4d8a0, #7cbc5c); border: 0; }
.tl-scroll { display: flex; justify-content: space-between; margin-top: 2px; height: 8px; }
.tl-scroll button { width: 7px; border: 1px solid #bbb; font-size: 6px; line-height: 6px; }
.tl-scroll i { width: 65px; margin-left: -14px; border: 1px solid #bbb; }

.vscroll { width: 11px; margin-right: 3px; padding-top: 2px; display: flex; flex-direction: column; }
.vscroll button { height: 10px; border: 1px solid #4c4c4c; background: #9a9a9a; }
.vgap { height: 30px; background: #565656; }
.vthumb { flex: 1; background: #999; border: 1px solid #4c4c4c; }
.up, .down, .lt, .rt { width: 0; height: 0; border: 3px solid transparent; }
.up { border-bottom-color: #222; border-top: 0; }
.down { border-top-color: #222; border-bottom: 0; }
.lt { border-right-color: #222; border-left: 0; }
.rt { border-left-color: #222; border-right: 0; }

/* Sheet tabs */
.sheetbar { display: flex; height: 20px; align-items: center; padding: 0 16px 2px 12px; color: #eee; }
.nav { width: 20px; height: 16px; }
.nav .lt { border-right-color: #eee; }
.nav .rt { border-left-color: #eee; }
.more { width: 22px; font-size: 12px; }
.stab { height: 16px; margin-right: 3px; background: #6c1f98; color: #eee; font-family: "Open Sans", sans-serif; white-space: nowrap; }
.stab-on { width: 76px; height: 17px; margin-right: 2px; border: 1px solid #fff; background: linear-gradient(#fff, #b8c4cc); color: #1e7e4a; font-weight: bold; text-decoration: underline; }
.s1 { width: 128px; padding-right: 5px; }
.s2 { width: 99px; }
.s3 { width: 153px; padding-right: 5px; }
.s4 { width: 8px; }
.plus { width: 14px; }
.sheetbar .dots { width: 27px; }
.hscroll { flex: 1; display: flex; height: 11px; gap: 1px; }
.hscroll button { width: 10px; border: 1px solid #4c4c4c; background: #9a9a9a; }
.hscroll span { flex: 1; background: #999; border: 1px solid #4c4c4c; }

/* Status bar */
.status { display: flex; align-items: center; height: 16px; padding-left: 5px; background: #555756; color: #eee; }
.macro { margin-left: 13px; }
.views { display: flex; margin-left: auto; }
.views button { width: 28px; height: 16px; }
.views .on { background: #424342; }
.zoom { display: flex; align-items: center; }
.zoom button { width: 11px; font-size: 12px; font-weight: bold; }
.zoom input { appearance: none; width: 74px; height: 10px; background: linear-gradient(#ddd, #ddd) no-repeat center / 100% 1px; }
.zoom input::-webkit-slider-thumb { appearance: none; width: 3px; height: 8px; background: #fff; }
.pct { width: 30px; padding-left: 8px; }

/* Taskbar */
.taskbar { display: grid; grid-template-columns: 1fr auto 1fr; align-items: center; height: 35px; background: #1c1c1c; color: #ddd; }
.weather { justify-self: start; gap: 1px; margin-left: 14px; text-align: left; }
.apps { display: flex; align-items: center; padding-left: 3px; }
.apps button { position: relative; width: 32px; height: 30px; }
.apps .search { margin: 0 2px 0 4px; }
.apps button:first-child { width: 28px; }
.search { display: flex; align-items: center; width: 160px; height: 24px; padding: 0 3px 0 8px; gap: 6px; border-radius: 12px; background: #343434; }
.search input { flex: 1; min-width: 0; font-size: 10px; }
.search input::placeholder { color: #bbb; opacity: 1; }
.run::after { content: ""; position: absolute; bottom: 1px; left: 14px; width: 4px; height: 2px; border-radius: 1px; background: #999; }
.active { background: #2a2c2c; }
.active::after { left: 10px; width: 12px; background: #5cb4e0; }
.tray { display: flex; justify-content: flex-end; align-items: center; gap: 7px; padding-right: 14px; }
.tray button:first-child { margin-right: 5px; }
.clock { width: 48px; justify-content: flex-end; text-align: right; }
```
FILE: app.js
```js
const NS = 'http://www.w3.org/2000/svg';

function draw(parent, tag, attrs, text) {
  const el = document.createElementNS(NS, tag);
  for (const key in attrs) el.setAttribute(key, attrs[key]);
  if (text !== undefined) el.textContent = text;
  parent.appendChild(el);
  return el;
}

function fill(id, labels, current) {
  const host = document.getElementById(id);
  labels.forEach((label) => {
    const cell = document.createElement('span');
    cell.textContent = label;
    if (label === current) cell.className = 'cur';
    host.appendChild(cell);
  });
}

fill('cols', 'ABCDEFGHIJKLMNOPQRSTUVW'.split(''), 'A');
fill('rownums', Array.from({ length: 29 }, (_, i) => String(i + 10)));

// BOM axis
const bom = document.getElementById('bom');
['0', '0.5', '1', '1.5', '2', '2.5'].forEach((t, i) =>
  draw(bom, 'text', { x: 175 + i * 30, y: 272, class: 't5 mid' }, t));

// Purchase by party
const client = document.getElementById('client');
[0, 5, 10, 15, 20].forEach((v) =>
  draw(client, 'text', { x: 379, y: 239 - v * 2.12, class: 't6 end' }, v));
[16, 6, 11, 14, 13, 15, 8, 16, 13].forEach((v, i) => {
  const x = 394.3 + i * 20.9;
  const y = 237 - v * 2.12;
  draw(client, 'rect', { x: x - 5.2, y, width: 10.4, height: v * 2.12, fill: 'url(#barfill)' });
  const w = v > 9 ? 9 : 6;
  const tx = x - 7 + (9 - w);
  draw(client, 'path', { class: 'tag', d: `M${tx} ${y - 11}h${w}v3.500h3v-1.500l3 2.500-3 2.500v-1.500h-3v3.500h-${w}z` });
  draw(client, 'text', { x: tx + w / 2, y: y - 4.5, class: 'tagtext mid' }, v);
  const name = i === 8 ? 'PARTY:-3' : 'PARTY:-' + (22 + i);
  draw(client, 'text', { transform: `translate(${x + 2} 246) rotate(-45)`, class: 't6 end' }, name);
});

// Line chart
const line = document.getElementById('line');
[0, 1, 2, 3, 4, 5, 6].forEach((v) =>
  draw(line, 'text', { x: 137, y: 420.5 - v * 13.3, class: 't5 end' }, v ? v + '0000' : '0'));
const series = [
  ['manu', '#2f5fd0', '#8fb0f4', 161, [418, 418, 418, 418, 418], 2.5],
  ['purchase', '#e8653c', '#f8a888', 195, [346, 344, 345, 345.5, 351], 4],
  ['cons', '#8fa0bc', '#ccd4e0', 237, [359, 358, 364, 382.5, 371], 4],
  ['stock', '#d8c020', '#fce45c', 268, [405.5, 405.5, 401, 382.5, 399], 4]
];
series.forEach(([name, stroke, dot, lx, ys, r]) => {
  const d = 'M' + ys.map((y, i) => `${161 + i * 37.3} ${y}`).join('L');
  draw(line, 'path', { d, stroke, fill: 'none', 'stroke-width': r, opacity: 0.6, filter: r > 3 ? 'url(#glow)' : '' });
  draw(line, 'path', { d, stroke, fill: 'none', 'stroke-width': r > 3 ? 1.5 : 1 });
  ys.forEach((y, i) => {
    if (r > 3) draw(line, 'circle', { cx: 161 + i * 37.3, cy: y, r: r + 1, fill: stroke, opacity: 0.5 });
    draw(line, 'circle', { cx: 161 + i * 37.3, cy: y, r, fill: dot });
  });
  draw(line, 'path', { d: `M${lx} 326h13`, stroke });
  draw(line, 'circle', { cx: lx + 6.5, cy: 326, r: 1.5, fill: dot });
  draw(line, 'text', { x: lx + 14, y: 328, class: 't5' }, name);
});
[23, 24, 25, 26, 27].forEach((n, i) =>
  draw(line, 'text', { x: 161 + i * 37.3, y: 428, class: 't5 mid' }, 'Article:-' + n));

// Stacked chart: segments from the bottom up, in thousands
const stack = document.getElementById('stack');
const colors = ['#3560b8', '#e0642c', '#9a9a9a', '#ecc00c', '#4c94d4'];
for (let v = 0; v <= 35; v += 5) {
  draw(stack, 'text', { x: 379, y: 410 - v * 1.486, class: 't6 end' }, v ? v * 1000 : 0);
}
[
  [2.5, 2.2, 4.5, 2.7, 7.2], [2.9, 6.3, 9.4, 6.5, 0], [5.2, 2.9, 3.4, 8.3, 9],
  [0, 0, 2.7, 5.6, 0], [3.8, 5.2, 1.8, 0, 0], [4.5, 4, 0, 4.7, 7],
  [4.7, 4.9, 5.8, 7.2, 7.9], [3.8, 2.9, 3.6, 4.9, 6.7], [5.4, 2.5, 0, 2.9, 7.9],
  [0, 6.3, 4.3, 2.7, 0]
].forEach((parts, i) => {
  const x = 394.3 + i * 19.95;
  let y = 408;
  parts.forEach((p, k) => {
    if (!p) return;
    const h = p * 1.486;
    y -= h;
    draw(stack, 'rect', { x: x - 4, y, width: 8, height: h, fill: colors[k] });
  });
  const name = 'Product:-' + String(i + 1).padStart(2, '0');
  draw(stack, 'text', { transform: `translate(${x + 2} 416) rotate(-45)`, class: 't6 end' }, name);
});
['#3560b8', '#e0642c', '#7ea4d4', '#ecc00c', '#4c94d4'].forEach((c, i) => {
  draw(stack, 'rect', { x: 386.5 + i * 37.5, y: 444.5, width: 3, height: 3, fill: c });
  draw(stack, 'text', { x: 392 + i * 37.5, y: 448, class: 't5' }, 'Article:-' + (20 + i));
});
```
